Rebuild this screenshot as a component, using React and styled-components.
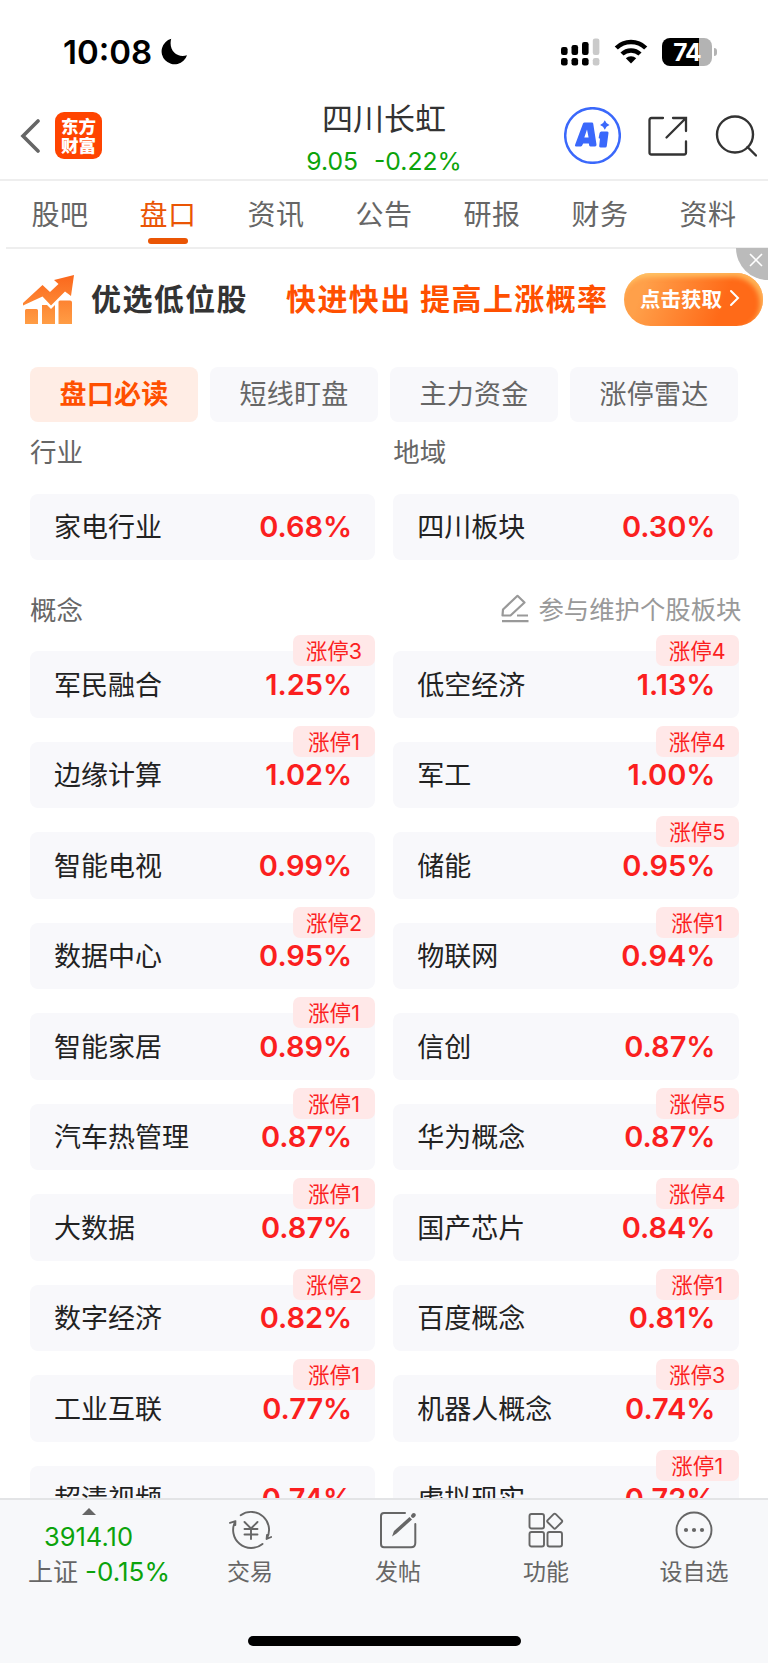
import React from "react";
import styled, { createGlobalStyle } from "styled-components";

const tabs = ["股吧", "盘口", "资讯", "公告", "研报", "财务", "资料"];

const filters = ["盘口必读", "短线盯盘", "主力资金", "涨停雷达"];

const concepts = [
  { name: "军民融合", change: "1.25%", limit: 3 },
  { name: "低空经济", change: "1.13%", limit: 4 },
  { name: "边缘计算", change: "1.02%", limit: 1 },
  { name: "军工", change: "1.00%", limit: 4 },
  { name: "智能电视", change: "0.99%" },
  { name: "储能", change: "0.95%", limit: 5 },
  { name: "数据中心", change: "0.95%", limit: 2 },
  { name: "物联网", change: "0.94%", limit: 1 },
  { name: "智能家居", change: "0.89%", limit: 1 },
  { name: "信创", change: "0.87%" },
  { name: "汽车热管理", change: "0.87%", limit: 1 },
  { name: "华为概念", change: "0.87%", limit: 5 },
  { name: "大数据", change: "0.87%", limit: 1 },
  { name: "国产芯片", change: "0.84%", limit: 4 },
  { name: "数字经济", change: "0.82%", limit: 2 },
  { name: "百度概念", change: "0.81%", limit: 1 },
  { name: "工业互联", change: "0.77%", limit: 1 },
  { name: "机器人概念", change: "0.74%", limit: 3 },
  { name: "超清视频", change: "0.74%" },
  { name: "虚拟现实", change: "0.72%", limit: 1 }
];

const BoardCard = props => (
  <Card>
    <CardName>{props.name}</CardName>
    <CardChange>{props.change}</CardChange>
    {props.limit && <LimitBadge>涨停{props.limit}</LimitBadge>}
  </Card>
);

const MoonIcon = () => (
  <svg width="27" height="27" viewBox="0 0 27 27">
    <path d="M10.2 0.8A13 13 0 1 0 26 17.2C17 20.500 7 13 10.200 0.800Z" />
  </svg>
);

const SignalIcon = () => (
  <svg width="39" height="28" viewBox="0 0 39 28">
    <rect x="0" y="9" width="6.600" height="8" rx="2.200" />
    <rect x="10.500" y="7" width="6.600" height="10" rx="2.200" />
    <rect x="21" y="4" width="6.600" height="13" rx="2.200" />
    <rect x="0" y="20" width="6.600" height="7.500" rx="2.200" />
    <rect x="10.500" y="20" width="6.600" height="7.500" rx="2.200" />
    <rect x="21" y="20" width="6.600" height="7.500" rx="2.200" />
    <g fill="#cacaca">
      <rect x="31.800" y="0.500" width="6.600" height="16.500" rx="2.200" />
      <rect x="31.800" y="20" width="6.600" height="7.500" rx="2.200" />
    </g>
  </svg>
);

const WifiIcon = () => (
  <svg width="34" height="25" viewBox="0 0 34 25">
    <path
      d="M2.300 9A21 21 0 0 1 31.700 9M8 15A13 13 0 0 1 26 15"
      fill="none"
      stroke="#000"
      strokeWidth="4.500"
    />
    <path d="M17 24.500L11.800 19.200A7.600 7.600 0 0 1 22.200 19.200Z" />
  </svg>
);

const BackIcon = () => (
  <svg width="20" height="36" viewBox="0 0 20 36">
    <path
      d="M18 3L3 18L18 33"
      fill="none"
      stroke="#666"
      strokeWidth="3.600"
      strokeLinecap="round"
    />
  </svg>
);

const AiIcon = () => (
  <svg width="57" height="57" viewBox="0 0 57 57" fill="#3a68fb">
    <circle cx="28.500" cy="28.500" r="27.300" fill="none" stroke="#3a68fb" strokeWidth="2.500" />
    <path
      fillRule="evenodd"
      d="M20.500 15.500H28Q29 15.500 29.200 16.500L32.500 37.500Q32.600 39.500 31 39.500H26.500Q25 39.500 24.800 36.500H19.200Q18 39.500 16.800 39.500H12Q10.300 39.300 11.200 37.500L19 16.600Q19.500 15.500 20.500 15.500ZM23 22.500L20.300 30.500H24.600Z"
    />
    <path d="M37.300 24.500H43.300Q44.700 24.600 44.500 26L42.800 39Q42.600 40.500 41.200 40.500H36.500Q35 40.400 35.200 39L36 31.500H35.300Q34.600 31.300 34.700 30.500L35.600 26Q36 24.600 37.300 24.500Z" />
    <path d="M40.800 13.200Q42 16.700 45.500 18Q42 19.300 40.800 22.800Q39.600 19.300 36.100 18Q39.600 16.700 40.800 13.200Z" />
  </svg>
);

const ShareIcon = () => (
  <svg
    width="42"
    height="42"
    viewBox="0 0 42 42"
    fill="none"
    stroke="#333"
    strokeWidth="2.300"
    strokeLinecap="round"
  >
    <path d="M16 3H4.500Q2.500 3 2.500 5V37.500Q2.500 39.500 4.500 39.500H37Q39 39.500 39 37.500V26.500" />
    <path d="M26 3H39V16M38.500 3.500L19.500 22.500" />
  </svg>
);

const SearchIcon = () => (
  <svg width="42" height="42" viewBox="0 0 42 42" fill="none" stroke="#333" strokeWidth="2.400">
    <circle cx="20" cy="19.500" r="18" />
    <path d="M32.500 32L41 40.500" strokeLinecap="round" />
  </svg>
);

const GrowthIcon = () => (
  <svg width="52" height="50" viewBox="0 0 52 50">
    <defs>
      <linearGradient id="growth" x1="0" y1="0" x2="0" y2="1">
        <stop offset="0" stopColor="#fb671c" />
        <stop offset="1" stopColor="#ff9d45" />
      </linearGradient>
    </defs>
    <path
      fill="url(#growth)"
      d="M51 0L48 21L42 16.500L28 30.500L19.500 21.500L0 30.500V28L19.500 10L27 17L35.500 9L31 5L51 0ZM3.500 34H13.500Q15 34 15 35.500V49H2V35.500Q2 34 3.500 34ZM19 30H24L28 34L32 30V49H19ZM37 25.500H47Q49 25.500 49 27.500V49H35.500V27Q35.500 25.500 37 25.500Z"
    />
  </svg>
);

const ArrowIcon = () => (
  <svg width="12" height="18" viewBox="0 0 12 18">
    <path d="M2 2L9 9L2 16" fill="none" stroke="#fff" strokeWidth="2" strokeLinecap="round" />
  </svg>
);

const CloseIcon = () => (
  <svg width="14" height="14" viewBox="0 0 14 14">
    <path d="M1 1L13 13M13 1L1 13" stroke="#fff" strokeWidth="1.600" />
  </svg>
);

const EditIcon = () => (
  <svg width="28" height="29" viewBox="0 0 28 29" fill="none" stroke="#999" strokeWidth="2.200">
    <path d="M1.500 21.500L2 15.500L16.500 1.800L23.500 8.500L9.500 21.500Z" strokeLinejoin="round" />
    <path d="M16 21.500H27M1 27.200H27.500" />
  </svg>
);

const TradeIcon = () => (
  <svg
    width="44"
    height="40"
    viewBox="0 0 44 40"
    fill="none"
    stroke="#666"
    strokeWidth="1.900"
    strokeLinecap="round"
    strokeLinejoin="round"
  >
    <path d="M12.700 5.200A18 18 0 0 1 38.600 29L43.200 27M38.600 29L39 25" />
    <path d="M34.500 33.900A18 18 0 0 1 7.400 11.200L2 12.900M7.400 11.200L7.300 15" />
    <path d="M16.500 12L23 18.500L29.500 12M23 18.500V29M16.500 19H29.500M16.500 24.500H29.500" />
  </svg>
);

const PostIcon = () => (
  <svg width="38" height="40" viewBox="0 0 38 40" fill="none" stroke="#666" strokeWidth="2">
    <path
      d="M26 3H5Q2 3 2 6V34Q2 37.300 5 37.300H32Q36.300 37.300 36.300 33V14"
      strokeLinecap="round"
    />
    <path d="M13 26.500L15 21L30.500 7L33 9.500L17.500 23.500Z" fill="#666" stroke="none" />
    <path d="M34 5.800L34.800 5" strokeWidth="4" strokeLinecap="round" />
  </svg>
);

const FeaturesIcon = () => (
  <svg width="36" height="40" viewBox="0 0 36 40" fill="none" stroke="#666" strokeWidth="1.900">
    <rect x="1.500" y="4" width="14.500" height="14.500" rx="2" />
    <rect x="1.500" y="22" width="14.500" height="14.500" rx="2" />
    <rect x="19.500" y="22" width="14.500" height="14.500" rx="2" />
    <rect x="21" y="5.500" width="11.400" height="11.400" rx="1.500" transform="rotate(45 26.700 11.200)" />
  </svg>
);

const MoreIcon = () => (
  <svg width="38" height="40" viewBox="0 0 38 40">
    <circle cx="19" cy="20" r="17.500" fill="none" stroke="#666" strokeWidth="1.900" />
    <g fill="#666">
      <circle cx="11" cy="20" r="2.100" />
      <circle cx="19" cy="20" r="2.100" />
      <circle cx="27" cy="20" r="2.100" />
    </g>
  </svg>
);

const actions = [
  { label: "交易", Icon: TradeIcon },
  { label: "发帖", Icon: PostIcon },
  { label: "功能", Icon: FeaturesIcon },
  { label: "设自选", Icon: MoreIcon }
];

export const App = () => (
  <Screen>
    <GlobalStyle />
    <StatusBar>
      <Time>10:08</Time>
      <MoonIcon />
      <StatusIcons>
        <SignalIcon />
        <WifiIcon />
        <Battery>74</Battery>
      </StatusIcons>
    </StatusBar>
    <Header>
      <HeaderSide>
        <BackIcon />
        <Logo>
          <span>东方</span>
          <span>财富</span>
        </Logo>
      </HeaderSide>
      <Stock>
        <StockName>四川长虹</StockName>
        <StockPrice>
          <span>9.05</span>
          <span>-0.22%</span>
        </StockPrice>
      </Stock>
      <HeaderActions>
        <AiIcon />
        <ShareIcon />
        <SearchIcon />
      </HeaderActions>
    </Header>
    <Tabs>
      {tabs.map(tab => (
        <Tab key={tab} $active={tab === "盘口"}>
          {tab}
        </Tab>
      ))}
    </Tabs>
    <Banner>
      <GrowthIcon />
      <BannerTitle>优选低位股</BannerTitle>
      <BannerText>快进快出 提高上涨概率</BannerText>
      <BannerButton>
        点击获取
        <ArrowIcon />
      </BannerButton>
      <BannerClose>
        <CloseIcon />
      </BannerClose>
    </Banner>
    <Content>
      <Filters>
        {filters.map(filter => (
          <Filter key={filter} $active={filter === "盘口必读"}>
            {filter}
          </Filter>
        ))}
      </Filters>
      <Grid>
        <SectionTitle>行业</SectionTitle>
        <SectionTitle>地域</SectionTitle>
      </Grid>
      <Grid>
        <BoardCard name="家电行业" change="0.68%" />
        <BoardCard name="四川板块" change="0.30%" />
      </Grid>
      <ConceptHeader>
        <span>概念</span>
        <MaintainLink>
          <EditIcon />
          参与维护个股板块
        </MaintainLink>
      </ConceptHeader>
      <Grid>
        {concepts.map(concept => (
          <BoardCard key={concept.name} {...concept} />
        ))}
      </Grid>
    </Content>
    <Footer>
      <FooterRow>
        <Index>
          <Caret />
          <IndexValue>3914.10</IndexValue>
          <IndexLine>
            上证 <IndexChange>-0.15%</IndexChange>
          </IndexLine>
        </Index>
        {actions.map(({ label, Icon }) => (
          <Action key={label}>
            <Icon />
            <ActionLabel>{label}</ActionLabel>
          </Action>
        ))}
      </FooterRow>
      <HomeIndicator />
    </Footer>
  </Screen>
);

const GlobalStyle = createGlobalStyle`
  body {
    margin: 0;
    background: #fff;
  }

  * {
    box-sizing: border-box;
  }

  svg {
    display: block;
    flex-shrink: 0;
  }
`;

const Screen = styled.div`
  display: flex;
  flex-direction: column;
  width: 768px;
  height: 1663px;
  overflow: hidden;
  background: #fff;
  color: #222;
  font-family: Inter, "Noto Sans CJK SC", sans-serif;
  white-space: nowrap;
`;

const StatusBar = styled.div`
  display: flex;
  align-items: center;
  flex-shrink: 0;
  height: 92px;
  padding: 11px 56px 0 63px;
`;

const Time = styled.div`
  width: 98px;
  color: #000;
  font-size: 33px;
  font-weight: 600;
  line-height: 40px;
`;

const StatusIcons = styled.div`
  display: flex;
  align-items: center;
  gap: 14px;
  margin-left: auto;
`;

const Battery = styled.div`
  position: relative;
  width: 50px;
  height: 28px;
  border-radius: 8px;
  background: linear-gradient(to right, #000 37px, #b3b3b3 37px);
  color: #fff;
  font-size: 24.5px;
  font-weight: 700;
  line-height: 28px;
  text-align: center;
  letter-spacing: -1px;

  &::after {
    content: "";
    position: absolute;
    top: 10px;
    right: -5px;
    width: 3px;
    height: 8px;
    border-radius: 0 4px 4px 0;
    background: #b3b3b3;
  }
`;

const Header = styled.div`
  display: grid;
  grid-template-columns: 1fr auto 1fr;
  align-items: center;
  flex-shrink: 0;
  height: 89px;
  padding: 0 11px 0 20px;
  border-bottom: 2px solid #eee;
`;

const HeaderSide = styled.div`
  display: flex;
  align-items: center;
  gap: 15px;
`;

const Logo = styled.div`
  display: flex;
  flex-direction: column;
  align-items: center;
  justify-content: center;
  width: 47px;
  height: 47px;
  border-radius: 9px;
  background: #ff4400;
  color: #fff;
  font-size: 17.5px;
  font-weight: 900;
  line-height: 19px;
`;

const Stock = styled.div`
  display: flex;
  flex-direction: column;
  align-items: center;
  align-self: start;
  margin-left: -9px;
  padding-top: 8px;
`;

const StockName = styled.div`
  color: #333;
  font-size: 31px;
  line-height: 38px;
`;

const StockPrice = styled.div`
  display: flex;
  gap: 16px;
  margin-top: 8px;
  color: #0ba30b;
  font-size: 24.7px;
  line-height: 30px;
`;

const HeaderActions = styled.div`
  display: flex;
  align-items: center;
  justify-content: flex-end;
  gap: 26px;
`;

const Tabs = styled.div`
  display: flex;
  flex-shrink: 0;
  height: 68px;
  margin-left: 6px;
  border-bottom: 2px solid #eee;
`;

const Tab = styled.div`
  position: relative;
  width: 108px;
  color: ${props => (props.$active ? "#ea5504" : "#666")};
  font-size: 28px;
  line-height: 68px;
  letter-spacing: 0.5px;
  text-align: center;

  &::after {
    content: "";
    display: ${props => (props.$active ? "block" : "none")};
    position: absolute;
    left: 34px;
    bottom: 3px;
    width: 40px;
    height: 6px;
    border-radius: 3px;
    background: #ea5504;
  }
`;

const Banner = styled.div`
  position: relative;
  display: flex;
  align-items: center;
  flex-shrink: 0;
  height: 102px;
  padding: 0 5px 0 23px;
`;

const BannerTitle = styled.div`
  width: 195px;
  margin-left: 16px;
  padding-bottom: 7px;
  color: #333;
  font-size: 30px;
  font-weight: 700;
  letter-spacing: 1.400px;
`;

const BannerText = styled.div`
  padding-bottom: 7px;
  color: #ff5000;
  font-size: 30px;
  font-weight: 700;
  letter-spacing: 1.400px;
`;

const BannerButton = styled.div`
  display: flex;
  align-items: center;
  gap: 7px;
  width: 139px;
  height: 53px;
  margin: 0 0 2px auto;
  padding: 0 0 2px 16px;
  border-radius: 27px;
  background: linear-gradient(110deg, #ffa04a 15%, #ff6a18 70%);
  box-shadow: inset -3px 4px 5px rgba(255, 205, 110, 0.75);
  color: #fff;
  font-size: 20.5px;
  font-weight: 700;
`;

const BannerClose = styled.div`
  position: absolute;
  top: -1px;
  right: 0;
  display: flex;
  justify-content: flex-end;
  width: 32px;
  height: 32px;
  padding: 5px 5px 0 0;
  border-bottom-left-radius: 32px;
  background: #bbb;
`;

const Content = styled.div`
  flex: 1;
  min-height: 0;
  padding: 16px 29.5px 0 30px;
  overflow: hidden;
`;

const Filters = styled.div`
  display: flex;
  gap: 12px;
`;

const Filter = styled.div`
  width: 168px;
  height: 55px;
  border-radius: 8px;
  background: ${props => (props.$active ? "#ffede5" : "#f8f8fb")};
  color: ${props => (props.$active ? "#ff5000" : "#666")};
  font-size: 27px;
  font-weight: ${props => (props.$active ? 700 : 400)};
  line-height: 56px;
  letter-spacing: 0.3px;
  text-align: center;
`;

const Grid = styled.div`
  display: grid;
  grid-template-columns: 1fr 1fr;
  gap: 24px 18px;
`;

const SectionTitle = styled.div`
  height: 71.5px;
  color: #666;
  font-size: 26.5px;
  line-height: 60px;
`;

const Card = styled.div`
  position: relative;
  display: flex;
  align-items: center;
  justify-content: space-between;
  height: 66.5px;
  padding: 0 23px 0 24px;
  border-radius: 8px;
  background: #f8f8fb;
`;

const CardName = styled.div`
  padding-bottom: 2px;
  font-size: 27px;
`;

const CardChange = styled.div`
  color: #fb1f1f;
  font-size: 29px;
  font-weight: 600;
`;

const LimitBadge = styled.div`
  position: absolute;
  top: -16px;
  right: 0;
  width: 82.5px;
  height: 31px;
  border-radius: 7px;
  background: #ffe8e8;
  color: #fb1f1f;
  font-size: 21.5px;
  line-height: 32px;
  text-align: center;
`;

const ConceptHeader = styled.div`
  display: flex;
  align-items: center;
  justify-content: space-between;
  height: 91px;
  padding-top: 5px;
  color: #666;
  font-size: 26.5px;
`;

const MaintainLink = styled.div`
  display: flex;
  align-items: center;
  gap: 9px;
  margin-right: -3px;
  color: #999;
  font-size: 25.4px;
`;

const Footer = styled.div`
  display: flex;
  flex-direction: column;
  align-items: center;
  flex-shrink: 0;
  height: 165px;
  border-top: 2px solid #e3e4e6;
  background: #f7f8fa;
`;

const FooterRow = styled.div`
  display: flex;
  width: 100%;
  height: 136px;
`;

const Index = styled.div`
  display: flex;
  flex-direction: column;
  align-items: center;
  width: 177px;
  margin-right: -1px;
  padding-top: 8px;
`;

const Caret = styled.div`
  border: 7px solid transparent;
  border-top: 0;
  border-bottom-color: #666;
`;

const IndexValue = styled.div`
  margin-top: 5px;
  color: #0ba30b;
  font-size: 25.5px;
  line-height: 33px;
`;

const IndexLine = styled.div`
  margin-top: 1px;
  padding-left: 21px;
  color: #666;
  font-size: 25px;
  line-height: 36px;
`;

const IndexChange = styled.span`
  color: #0ba30b;
  font-size: 26px;
`;

const Action = styled.div`
  display: flex;
  flex-direction: column;
  align-items: center;
  width: 148px;
  padding-top: 10px;
`;

const ActionLabel = styled.div`
  margin-top: 4px;
  color: #666;
  font-size: 23px;
  line-height: 36px;
`;

const HomeIndicator = styled.div`
  width: 273px;
  height: 10px;
  border-radius: 5px;
  background: #000;
`;

export default App;
